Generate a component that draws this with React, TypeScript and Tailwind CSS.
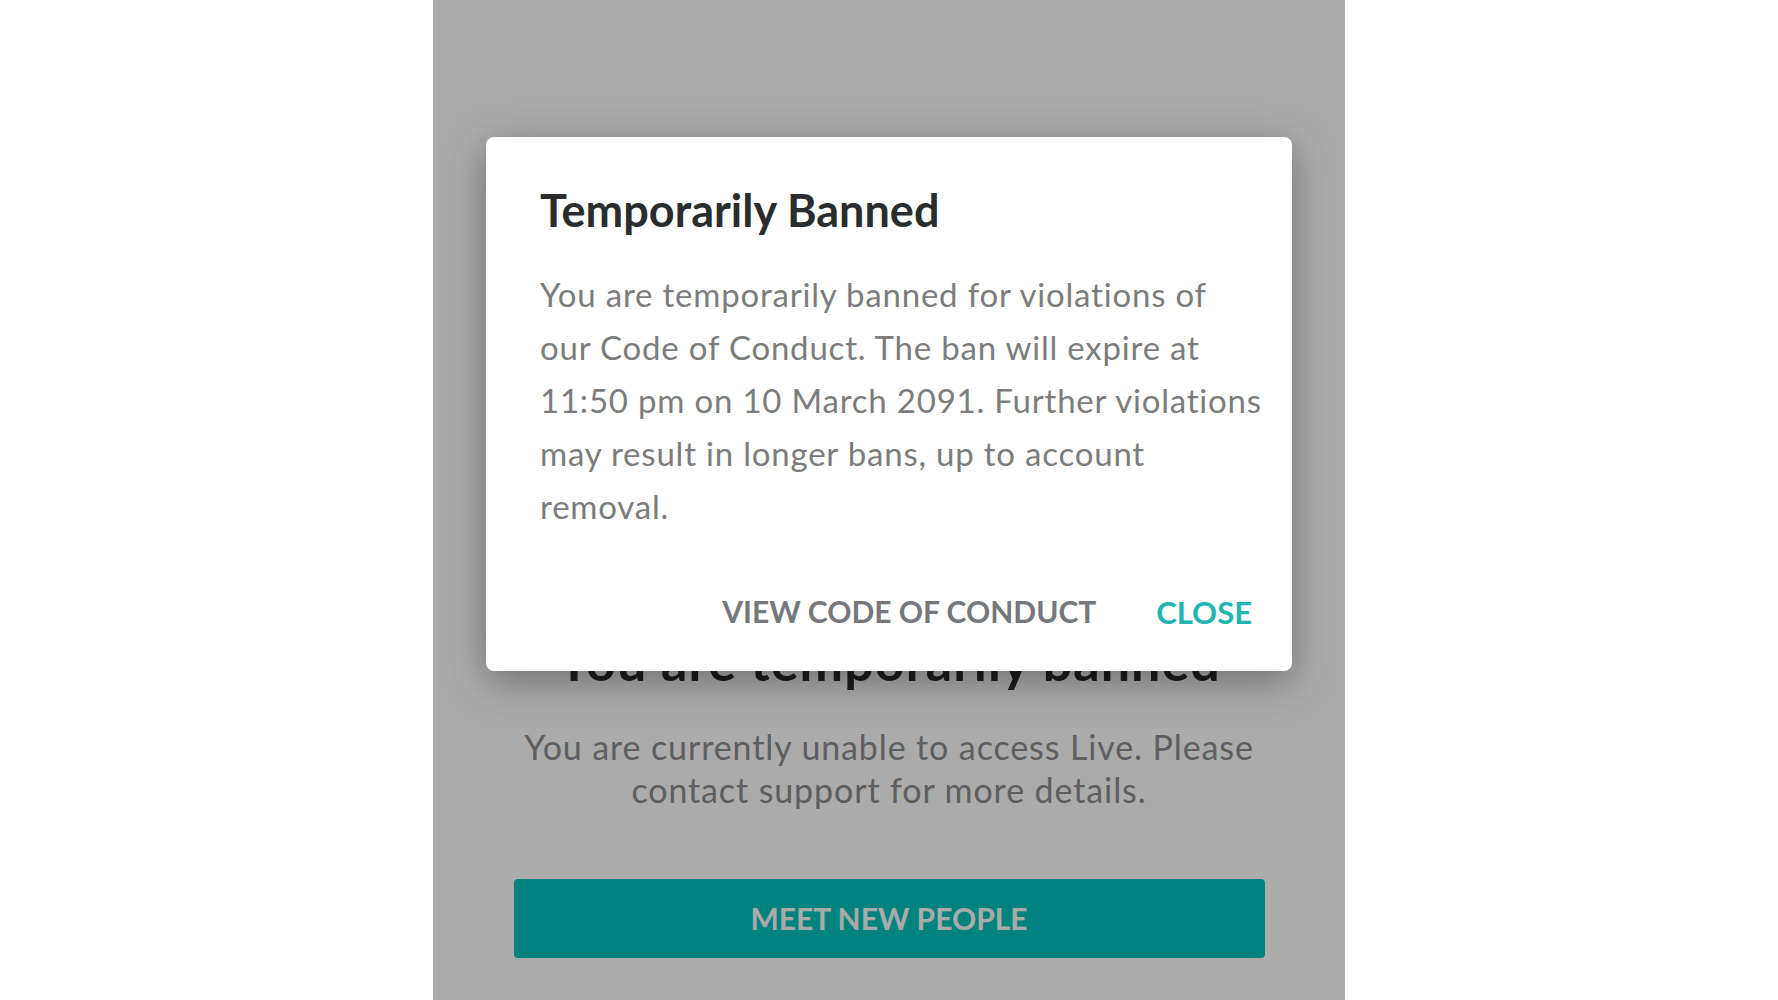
export default function App() {
  const font = { fontFamily: 'Lato, "Noto Sans", sans-serif' };

  return (
    <div className="flex h-[1000px] w-full justify-center bg-white" style={font}>
      <div className="relative flex h-full w-[912px] flex-col items-center justify-end bg-white pb-[42px]">
        <h2 className="text-[52px] font-bold leading-none tracking-[0.02em] text-[#2a2a2a]">You are temporarily banned</h2>
        <p className="mt-[38px] text-center text-[34px] leading-[43px] tracking-[0.026em] text-[#8c8c8c]">
          You are currently unable to access Live. Please
          <br />
          contact support for more details.
        </p>
        <button className="mt-[68px] flex h-[79px] w-[751px] items-center justify-center rounded-[4px] bg-[#00c3be] text-[30px] font-bold text-[#fcfffe]">
          MEET NEW PEOPLE
        </button>

        <div className="absolute inset-0 bg-black/[0.33]" />

        <div className="absolute left-[53px] right-[53px] top-[137px] flex h-[534px] flex-col rounded-[8px] bg-white pl-[54px] pr-[40px] pt-[48px] shadow-[0_10px_40px_rgba(0,0,0,0.35)]">
          <h1 className="text-[45px] font-bold leading-[50px] text-[#2a2d2e]">Temporarily Banned</h1>
          <p className="mt-[33px] whitespace-nowrap text-[33px] leading-[53px] tracking-[0.024em] text-[#7c7c7c]">
            You are temporarily banned for violations of
            <br />
            our Code of Conduct. The ban will expire at
            <br />
            11:50 pm on 10 March 2091. Further violations
            <br />
            may result in longer bans, up to account
            <br />
            removal.
          </p>
          <div className="mt-auto mb-[36px] flex items-center justify-end gap-[60px]">
            <button className="text-[30px] font-bold text-[#75777a]">VIEW CODE OF CONDUCT</button>
            <button className="text-[31px] font-bold text-[#20b5b0]">CLOSE</button>
          </div>
        </div>
      </div>
    </div>
  );
}
